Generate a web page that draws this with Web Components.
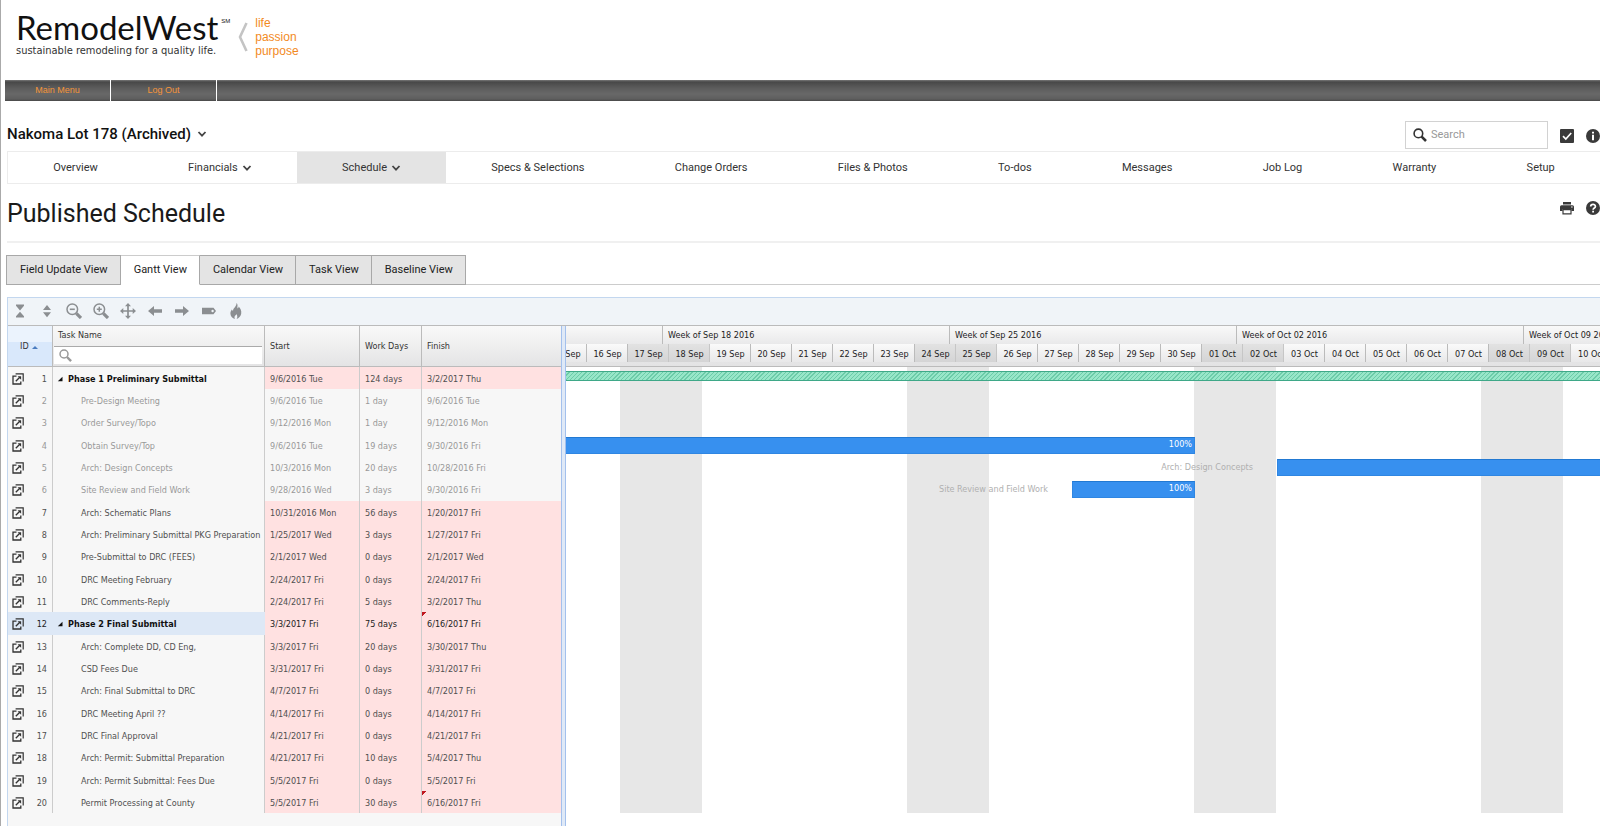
<!DOCTYPE html>
<html lang="en">
<head>
<meta charset="utf-8">
<title>Published Schedule</title>
<style>
  body { margin: 0; background: #fff; color: #222; font-family: Roboto, "Liberation Sans", sans-serif; }
</style>
</head>
<body>
<schedule-page></schedule-page>

<script>
const GRID_FONT = '"DejaVu Sans Condensed", "DejaVu Sans", sans-serif';

class Base extends HTMLElement {
  connectedCallback() {
    if (this.shadowRoot) return;
    const t = document.createElement('template');
    t.innerHTML = this.render();
    this.attachShadow({ mode: 'open' }).append(t.content.cloneNode(true));
  }
}

/* name: [viewBox, markup] */
const ICONS = {
  down: ['0 0 10 10', '<path d="M1.5 3l3.5 3.7L8.500 3" fill="none" stroke="currentColor" stroke-width="1.800"/>'],
  search: ['0 0 14 14', '<circle cx="5.400" cy="5.400" r="4.300" fill="none" stroke="currentColor" stroke-width="1.600"/><path d="M8.600 8.600l4.400 4.400" stroke="currentColor" stroke-width="2.600"/>'],
  check: ['0 0 14 14', '<rect width="14" height="14" rx="1" fill="currentColor"/><path d="M3 7.200l2.800 2.800 5.400-6" fill="none" stroke="#fff" stroke-width="1.700"/>'],
  info: ['0 0 14 14', '<circle cx="7" cy="7" r="7" fill="currentColor"/><path d="M6 2.800h2v1.800H6zM6 5.800h2v5.400H6z" fill="#fff"/>'],
  help: ['0 0 14 14', '<circle cx="7" cy="7" r="7" fill="currentColor"/><path d="M4.700 5.600c0-3 4.700-3 4.700-.2C9.400 7 7.100 7 7.100 8.800" fill="none" stroke="#fff" stroke-width="1.700"/><path d="M6.200 9.800h1.800v1.700H6.200z" fill="#fff"/>'],
  print: ['0 0 14 14', '<path d="M3 1h8v2.400H3zM1.500 4.200h11A1.500 1.500 0 0 1 14 5.700V10h-2.600V8H2.600v2H0V5.700a1.500 1.500 0 0 1 1.500-1.500z" fill="currentColor"/><path d="M3 8.600h8v4.200H3z" fill="#fff" stroke="currentColor" stroke-width="1.200"/><circle cx="11.900" cy="6" r=".7" fill="#fff"/>'],
  collapse: ['0 0 16 16', '<path d="M4 1.500h8v1.200L8 7.400 4 2.700zM4 14.500h8v-1.200L8 8.800l-4 4.500z" fill="currentColor"/>'],
  expand: ['0 0 16 16', '<path d="M4 7h8L8 2zM4 9.300h8L8 14.300z" fill="currentColor"/>'],
  zoomout: ['0 0 16 16', '<circle cx="6.300" cy="6.300" r="5.300" fill="none" stroke="currentColor" stroke-width="1.500"/><path d="M10.300 10.300l4.700 4.700" stroke="currentColor" stroke-width="3.200"/><path d="M3.800 6.300h5" stroke="currentColor" stroke-width="1.600"/>'],
  zoomin: ['0 0 16 16', '<circle cx="6.300" cy="6.300" r="5.300" fill="none" stroke="currentColor" stroke-width="1.500"/><path d="M10.300 10.300l4.700 4.700" stroke="currentColor" stroke-width="3.200"/><path d="M3.800 6.300h5M6.300 3.800v5" stroke="currentColor" stroke-width="1.500"/>'],
  move: ['0 0 16 16', '<path d="M8 2v12M2 8h12" stroke="currentColor" stroke-width="1.700"/><path d="M8 0l3 3.300H5zM8 16l3-3.300H5zM0 8l3.300-3v6zM16 8l-3.300-3v6z" fill="currentColor"/>'],
  left: ['0 0 16 16', '<path d="M1 8l6-5v3.300h8v3.400H7V13z" fill="currentColor"/>'],
  right: ['0 0 16 16', '<path d="M15 8L9 3v3.300H1v3.400h8V13z" fill="currentColor"/>'],
  tag: ['0 0 16 16', '<path fill-rule="evenodd" d="M1 4.700h11.500L15 8l-2.500 3.300H1zM11.600 6.800a1.200 1.200 0 1 0 0 2.400 1.200 1.200 0 0 0 0-2.400z" fill="currentColor"/>'],
  fire: ['0 0 16 16', '<path fill-rule="evenodd" d="M8.500 0c2 2 .4 3.700 1.200 5.400.6-.3.900-1 .8-1.900 1.700 1.500 3.300 4 2.700 7.200-.4 2.600-2.400 4.600-4.600 5.300 1-1.700 1-3.400-.3-5-.2 1-.7 1.300-1.300 1.700-.7 1-.6 2.300.1 3.300C4.300 15.200 2.300 13 2.400 10.400c0-1.700.8-2.600 1.300-3.900l1.300 1.400C5.200 4.700 8.700 3.700 8.500 0z" fill="currentColor"/>'],
  open: ['0 0 12 12', '<path d="M4.500 3.200H1v7.800h7.800V8.500" fill="none" stroke="currentColor" stroke-width="1.300"/><path d="M3.600 .9h7.600v7.600" fill="none" stroke="currentColor" stroke-width="1.200"/><path d="M3.800 8.300l4-4" stroke="currentColor" stroke-width="1.300"/><path d="M5.600 3.200h3.500V6.700z" fill="currentColor"/>'],
  sort: ['0 0 8 4', '<path d="M0 4h8L4 0z" fill="currentColor"/>'],
  twisty: ['0 0 6 6', '<path d="M5.500 .8v4.400H.8z" fill="currentColor"/>'],
  brace: ['0 0 10 30', '<path d="M8.500 1L2 15l6.500 14" fill="none" stroke="currentColor" stroke-width="2.600"/>']
};
customElements.define('ui-icon', class extends Base {
  render() {
    const [box, body] = ICONS[this.getAttribute('name')];
    return `<style>:host{display:inline-flex;width:14px;height:14px;flex:none}svg{width:100%;height:100%;display:block}</style>
      <svg viewBox="${box}" aria-hidden="true">${body}</svg>`;
  }
});

customElements.define('brand-header', class extends Base {
  render() {
    return `<style>
      :host { display: flex; height: 80px; box-sizing: border-box; padding: 10px 0 0 16px; }
      .word { display: flex; flex-direction: column; color: #111; }
      .name { display: flex; gap: 3px; font: 33px/34px Lato, sans-serif; }
      sup { font: 6px/22px "Liberation Sans", sans-serif; vertical-align: baseline; }
      .tag { font: 11px/13px "DejaVu Sans Condensed", sans-serif; color: #333; }
      ui-icon { width: 10px; height: 30px; margin: 12px 7px 0 8px; color: #c4c4c4; }
      .motto { font: 12px/14px "Liberation Sans", sans-serif; color: #f28a1e; padding-top: 6px; }
      .motto span { display: block; }
    </style>
    <div class="word"><div class="name">RemodelWest<sup>SM</sup></div><div class="tag">sustainable remodeling for a quality life.</div></div>
    <ui-icon name="brace"></ui-icon>
    <div class="motto"><span>life</span><span>passion</span><span>purpose</span></div>`;
  }
});

customElements.define('main-menu', class extends Base {
  render() {
    return `<style>
      :host { display: block; margin-left: 5px; }
      nav { display: flex; height: 21px; background: linear-gradient(#777 0, #484848 2px, #5c5c5c 8px, #686868 14px, #5e5e5e 19px, #484848 21px); }
      a { width: 105px; border-right: 1px solid #fff; text-align: center; color: #f4943a; text-decoration: none; font: 9px/21px "Liberation Sans", sans-serif; }
    </style>
    <nav aria-label="Main"><a href="#menu">Main Menu</a><a href="#logout">Log Out</a></nav>`;
  }
});

customElements.define('job-bar', class extends Base {
  render() {
    return `<style>
      :host { display: flex; justify-content: space-between; padding: 20px 0 2px 7px; height: 28px; }
      .job { display: flex; align-items: center; gap: 6px; padding: 0; border: 0; background: none; color: #111; font: 500 15px/26px Roboto, sans-serif; height: 26px; }
      .job ui-icon { width: 10px; height: 10px; color: #444; }
      .tools { display: flex; align-items: center; gap: 12px; }
      label { display: flex; align-items: center; gap: 4px; box-sizing: border-box; width: 143px; height: 28px; padding-left: 7px; border: 1px solid #d2d2d2; color: #333; }
      input { flex: 1; min-width: 0; border: 0; padding: 0; outline: 0; background: none; font: 11px/16px Roboto, sans-serif; }
      input::placeholder { color: #999; opacity: 1; }
      .icon { display: flex; padding: 2px 0 0; border: 0; background: none; color: #3a3a3a; }
    </style>
    <button class="job">Nakoma Lot 178 (Archived) <ui-icon name="down"></ui-icon></button>
    <div class="tools">
      <label><ui-icon name="search"></ui-icon><input type="text" placeholder="Search" aria-label="Search"></label>
      <button class="icon" aria-label="To-dos"><ui-icon name="check"></ui-icon></button>
      <button class="icon" aria-label="Information"><ui-icon name="info"></ui-icon></button>
    </div>`;
  }
});

customElements.define('job-nav', class extends Base {
  render() {
    const items = ['Overview', 'Financials+', 'Schedule+', 'Specs & Selections', 'Change Orders', 'Files & Photos', 'To-dos', 'Messages', 'Job Log', 'Warranty', 'Setup'];
    return `<style>
      :host { display: block; margin-left: 7px; overflow: hidden; border: 1px solid #ececec; border-right: 0; }
      nav { display: flex; }
      a { display: flex; flex: 1 0 auto; align-items: center; justify-content: center; gap: 4px; padding: 0 45px; height: 31px; white-space: nowrap; color: #333; text-decoration: none; font: 11px/32px Roboto, sans-serif; }
      a.on { background: #e4e4e4; }
      ui-icon { width: 10px; height: 10px; color: #444; }
    </style>
    <nav aria-label="Job">${items.map(s => {
      const n = s.replace('+', '');
      return `<a href="#${n.split(' ')[0].toLowerCase()}" class="${n === 'Schedule' ? 'on' : ''}">${n.replace('&', '&amp;')}${s.endsWith('+') ? '<ui-icon name="down"></ui-icon>' : ''}</a>`;
    }).join('')}</nav>`;
  }
});

customElements.define('page-title', class extends Base {
  render() {
    return `<style>
      :host { display: flex; justify-content: space-between; margin-left: 7px; height: 57px; border-bottom: 2px solid #f0f0f0; }
      h1 { margin: 0; padding: 15px 0 0; font: 400 25px/30px Roboto, sans-serif; color: #1a1a1a; }
      .tools { display: flex; align-items: flex-start; gap: 12px; padding-top: 17px; }
      button { display: flex; padding: 0; border: 0; background: none; color: #3a3a3a; }
    </style>
    <h1><slot></slot></h1>
    <div class="tools">
      <button aria-label="Print"><ui-icon name="print"></ui-icon></button>
      <button aria-label="Help"><ui-icon name="help"></ui-icon></button>
    </div>`;
  }
});

customElements.define('view-tabs', class extends Base {
  render() {
    const tabs = ['Field Update View', 'Gantt View', 'Calendar View', 'Task View', 'Baseline View'];
    return `<style>
      :host { display: block; margin: 12px 0 12px 6px; border-bottom: 1px solid #ccc; }
      div { display: flex; margin-bottom: -1px; }
      button { height: 30px; padding: 0 12px 0 13px; border: 1px solid #a8a8a8; border-left-width: 0; background: #e4e4e4; color: #222; font: 11px/28px Roboto, sans-serif; }
      button:first-child { border-left-width: 1px; }
      button[aria-selected=true] { background: #fff; border-bottom-color: #fff; border-top-color: #ccc; }
    </style>
    <div role="tablist">${tabs.map((t, i) => `<button role="tab" aria-selected="${i === 1}">${t}</button>`).join('')}</div>`;
  }
});

customElements.define('gantt-toolbar', class extends Base {
  render() {
    const tools = { collapse: 'Collapse all', expand: 'Expand all', zoomout: 'Zoom out', zoomin: 'Zoom in', move: 'Zoom to fit', left: 'Previous', right: 'Next', tag: 'Labels', fire: 'Critical path' };
    return `<style>
      :host { display: flex; gap: 11px; align-items: center; height: 25px; padding: 0 0 2px 4px; background: #f0f4f8; border-bottom: 1px solid #bbb; }
      button { display: flex; padding: 0; border: 0; background: none; color: #8b8e91; }
      ui-icon { width: 16px; height: 16px; }
    </style>${Object.entries(tools).map(([k, v]) => `<button aria-label="${v}"><ui-icon name="${k}"></ui-icon></button>`).join('')}`;
  }
});

/* name, start, days, finish, flags: p = phase, d = done, s = selected, m = finish marker */
const TASKS = [
  ['Phase 1 Preliminary Submittal', '9/6/2016 Tue', '124 days', '3/2/2017 Thu', 'p'],
  ['Pre-Design Meeting', '9/6/2016 Tue', '1 day', '9/6/2016 Tue', 'd'],
  ['Order Survey/Topo', '9/12/2016 Mon', '1 day', '9/12/2016 Mon', 'd'],
  ['Obtain Survey/Top', '9/6/2016 Tue', '19 days', '9/30/2016 Fri', 'd'],
  ['Arch: Design Concepts', '10/3/2016 Mon', '20 days', '10/28/2016 Fri', 'd'],
  ['Site Review and Field Work', '9/28/2016 Wed', '3 days', '9/30/2016 Fri', 'd'],
  ['Arch: Schematic Plans', '10/31/2016 Mon', '56 days', '1/20/2017 Fri', ''],
  ['Arch: Preliminary Submittal PKG Preparation', '1/25/2017 Wed', '3 days', '1/27/2017 Fri', ''],
  ['Pre-Submittal to DRC (FEES)', '2/1/2017 Wed', '0 days', '2/1/2017 Wed', ''],
  ['DRC Meeting February', '2/24/2017 Fri', '0 days', '2/24/2017 Fri', ''],
  ['DRC Comments-Reply', '2/24/2017 Fri', '5 days', '3/2/2017 Thu', ''],
  ['Phase 2 Final Submittal', '3/3/2017 Fri', '75 days', '6/16/2017 Fri', 'psm'],
  ['Arch: Complete DD, CD Eng,', '3/3/2017 Fri', '20 days', '3/30/2017 Thu', ''],
  ['CSD Fees Due', '3/31/2017 Fri', '0 days', '3/31/2017 Fri', ''],
  ['Arch: Final Submittal to DRC', '4/7/2017 Fri', '0 days', '4/7/2017 Fri', ''],
  ['DRC Meeting April ??', '4/14/2017 Fri', '0 days', '4/14/2017 Fri', ''],
  ['DRC Final Approval', '4/21/2017 Fri', '0 days', '4/21/2017 Fri', ''],
  ['Arch: Permit: Submittal Preparation', '4/21/2017 Fri', '10 days', '5/4/2017 Thu', ''],
  ['Arch: Permit Submittal: Fees Due', '5/5/2017 Fri', '0 days', '5/5/2017 Fri', ''],
  ['Permit Processing at County', '5/5/2017 Fri', '30 days', '6/16/2017 Fri', 'm']
];

customElements.define('task-grid', class extends Base {
  render() {
    const rows = TASKS.map(([name, start, days, finish, f], i) => {
      const cls = [f.includes('p') && 'phase', f.includes('d') && 'done', f.includes('s') && 'selected', f.includes('m') && 'marked'].filter(Boolean).join(' ');
      return `<tr class="${cls}">
        <td><div class="id"><button aria-label="Open task ${i + 1}"><ui-icon name="open"></ui-icon></button><span>${i + 1}</span></div></td>
        <td class="name">${f.includes('p') ? '<ui-icon class="tw" name="twisty"></ui-icon>' : ''}<span>${name}</span></td>
        <td class="v">${start}</td><td class="v">${days}</td><td class="v">${finish}</td></tr>`;
    }).join('');
    return `<style>
      :host { display: block; background: #f7f7f7; }
      table { width: 100%; table-layout: fixed; border-collapse: separate; border-spacing: 0; font: 9px/12px ${GRID_FONT}; color: #505050; }
      th, td { box-sizing: border-box; padding: 0 0 0 5px; text-align: left; font-weight: 400; border-right: 1px solid #ccc; white-space: nowrap; overflow: hidden; }
      th:last-child, td:last-child { border-right: 0; }
      th { height: 41px; color: #333; background: linear-gradient(#f9f9f9, #e4e4e5); border-bottom: 1px solid #bbb; border-right-color: #bbb; }
      th.idh { padding-left: 12px; background: linear-gradient(#ebf3fd 0 16px, #d9e8fb 16px); }
      th.idh ui-icon { width: 6px; height: 3px; margin: 0 0 3px 3px; color: #4a7cc0; }
      th.nameh { padding: 0; vertical-align: top; }
      .nameh div { padding-left: 5px; line-height: 19px; height: 20px; }
      label { display: flex; align-items: center; height: 18px; margin: 0 2px 0 1px; padding-left: 5px; box-sizing: border-box; background: #fff; border-top: 1px solid #aaa; color: #999; }
      label ui-icon { width: 13px; height: 13px; }
      input { flex: 1; min-width: 0; border: 0; outline: 0; padding: 0 3px; background: none; font: inherit; height: 14px; }
      tbody tr { height: 22px; }
      tbody tr:nth-child(3n) { height: 23px; }
      td { padding-top: 1px; }
      td:first-child { padding-left: 4px; }
      .id { display: flex; align-items: center; justify-content: space-between; padding-right: 5px; }
      button { display: flex; padding: 0; border: 0; background: none; color: #333; }
      button ui-icon { width: 12px; height: 12px; }
      .name { padding-left: 28px; }
      .phase .name { padding-left: 4px; font-weight: 700; color: #111; }
      .tw { width: 6px; height: 6px; margin-right: 5px; }
      .v { background: #ffe1e1; }
      .done { color: #999; }
      .done .v { background: none; }
      .selected { color: #222; }
      .selected td:not(.v) { background: #dde8f6; border-right-color: #dde8f6; }
      .marked td:last-child { background: linear-gradient(135deg, #c01820 0 3px, transparent 3px) no-repeat, #ffe1e1; }
    </style>
    <table>
      <colgroup><col style="width:45px"><col style="width:212px"><col style="width:95px"><col style="width:62px"><col></colgroup>
      <thead><tr><th class="idh">ID<ui-icon name="sort"></ui-icon></th>
      <th class="nameh"><div>Task Name</div><label><ui-icon name="search"></ui-icon><input type="text" aria-label="Filter by task name"></label></th>
      <th>Start</th><th>Work Days</th><th>Finish</th></tr></thead>
      <tbody>${rows}</tbody>
    </table>`;
  }
});

customElements.define('gantt-timeline', class extends Base {
  render() {
    const weeks = ['', 'Week of Sep 18 2016', 'Week of Sep 25 2016', 'Week of Oct 02 2016', 'Week of Oct 09 2016'];
    const days = [];
    for (let d = 15; d <= 40; d++) {
      const off = (d - 17) % 7 === 0 || (d - 18) % 7 === 0;
      days.push(`<span class="${off ? 'off' : ''}">${d > 30 ? String(d - 30).padStart(2, '0') + ' Oct' : d + ' Sep'}</span>`);
    }
    const bars = {
      1: '<div class="summary"></div>',
      4: '<div class="bar" style="width:629px">100%</div>',
      5: '<div class="label" style="width:711px">Arch: Design Concepts</div><div class="bar rest"></div>',
      6: '<div class="label" style="width:506px">Site Review and Field Work</div><div class="bar" style="width:123px">100%</div>'
    };
    return `<style>
      :host { display: block; overflow: hidden; background: #fff; font: 9px/12px ${GRID_FONT}; color: #222; }
      .head { height: 40px; overflow: hidden; background: linear-gradient(#f9f9f9, #e9e9ea 18px, #e3e3e4); border-bottom: 1px solid #bbb; }
      .weeks, .days { display: flex; }
      .weeks { margin-left: -190px; }
      .weeks span { flex: none; box-sizing: border-box; width: 287px; height: 18px; line-height: 19px; padding-left: 5px; border-right: 1px solid #bbb; }
      .days { margin-left: -20px; }
      .days span { flex: none; box-sizing: border-box; width: 41px; height: 18px; line-height: 20px; padding-left: 1px; text-align: center; border-right: 1px solid #bbb; background: linear-gradient(#fafafa, #e8e8e9); }
      .days .off { background: linear-gradient(#e2e2e2, #d4d4d5); border-right-color: #c6c6c6; }
      .rows { background: repeating-linear-gradient(90deg, #fff 0 54px, #e7e7e7 54px 136px, #fff 136px 287px); }
      .row { display: flex; height: 22px; }
      .row:nth-child(3n) { height: 23px; }
      .summary { flex: 1; box-sizing: border-box; height: 10px; margin-top: 4px; border: solid #3fa888; border-width: 1px 0; background: repeating-linear-gradient(135deg, #98e6c9 0 2px, #6ccba8 2px 3px); }
      .bar { flex: none; box-sizing: border-box; height: 17px; margin-top: 3px; padding-right: 2px; border: 1px solid #2f86e2; border-top-color: #2279d2; border-left-width: 0; background: #3790ef; color: #fff; text-align: right; line-height: 13px; }
      .label + .bar { border-left-width: 1px; }
      .bar.rest { flex: 1; border-right-width: 0; }
      .label { flex: none; box-sizing: border-box; padding-right: 24px; text-align: right; line-height: 23px; color: #b0b0b0; }
    </style>
    <div class="head"><div class="weeks">${weeks.map(w => `<span>${w}</span>`).join('')}</div><div class="days">${days.join('')}</div></div>
    <div class="rows">${TASKS.map((t, i) => `<div class="row">${bars[i + 1] || ''}</div>`).join('')}</div>`;
  }
});

customElements.define('gantt-panel', class extends Base {
  render() {
    return `<style>
      :host { display: flex; flex-direction: column; flex: 1; margin-left: 7px; border: solid #c3d7ef; border-width: 1px 0 0 1px; }
      .split { display: flex; flex: 1; }
      task-grid { flex: none; width: 553px; }
      .handle { box-sizing: border-box; width: 5px; background: #dfe9f7; border: solid #a3c0ec; border-width: 0 1px; }
      gantt-timeline { flex: 1; min-width: 0; }
    </style>
    <gantt-toolbar></gantt-toolbar>
    <div class="split"><task-grid></task-grid><div class="handle"></div><gantt-timeline></gantt-timeline></div>`;
  }
});

customElements.define('schedule-page', class extends Base {
  render() {
    return `<style>
      :host { display: flex; flex-direction: column; box-sizing: border-box; min-height: 100vh; overflow: hidden; background: linear-gradient(#aaa, #aaa) no-repeat 0 0 / 1px 100%; }
    </style>
    <brand-header></brand-header>
    <main-menu></main-menu>
    <job-bar></job-bar>
    <job-nav></job-nav>
    <page-title>Published Schedule</page-title>
    <view-tabs></view-tabs>
    <gantt-panel></gantt-panel>`;
  }
});
</script>
</body>
</html>
